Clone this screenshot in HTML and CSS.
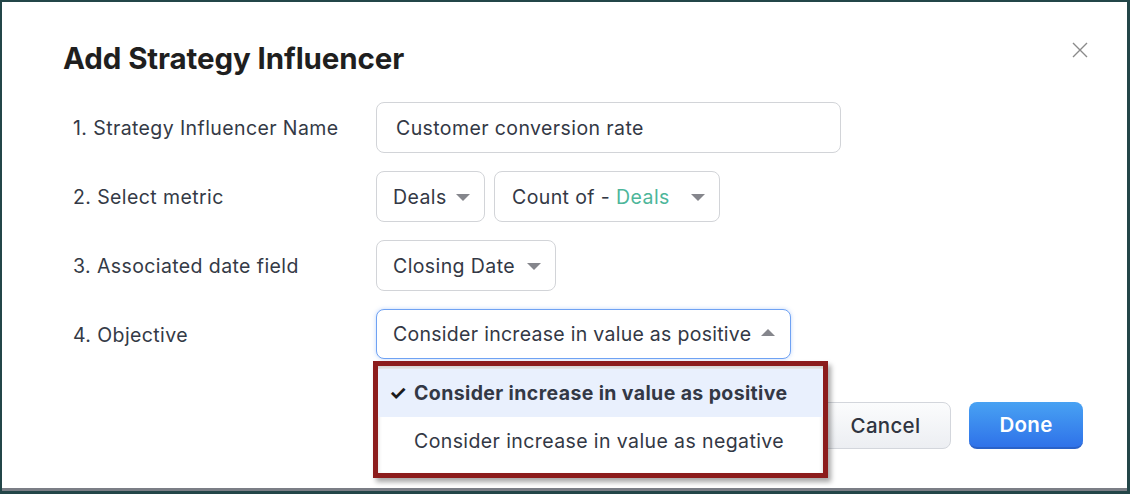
FILE: index.html
```html
<!DOCTYPE html>
<html>
<head>
<meta charset="utf-8">
<link rel="stylesheet" href="styles.css">
</head>
<body>
<div class="dialog">
  <button class="close" aria-label="Close">
    <svg width="16" height="16" viewBox="0 0 16 16"><path d="M1 1L15 15M15 1L1 15" stroke="#8a8a8a" stroke-width="1.4" fill="none"/></svg>
  </button>
  <h1 class="title">Add Strategy Influencer</h1>
  <div class="form">
    <div class="label">1. Strategy Influencer Name</div>
    <div class="field"><div class="input name-input">Customer conversion rate</div></div>

    <div class="label">2. Select metric</div>
    <div class="field">
      <div class="select sel-deals">Deals<span class="caret"></span></div>
      <div class="select sel-count"><span>Count of - <span class="green">Deals</span></span><span class="caret"></span></div>
    </div>

    <div class="label">3. Associated date field</div>
    <div class="field"><div class="select sel-date">Closing Date<span class="caret"></span></div></div>

    <div class="label">4. Objective</div>
    <div class="field objective">
      <div class="select sel-obj active">Consider increase in value as positive<span class="caret up"></span></div>
      <div class="menu">
        <div class="item selected"><span class="check">✓</span>Consider increase in value as positive</div>
        <div class="item">Consider increase in value as negative</div>
      </div>
    </div>
  </div>
  <div class="footer">
    <button class="btn cancel">Cancel</button>
    <button class="btn done">Done</button>
  </div>
</div>
</body>
</html>
```
FILE: styles.css
```css
html, body {
  margin: 0;
  padding: 0;
}
body {
  background: #234648;
  width: 1130px;
  height: 494px;
  overflow: hidden;
  font-family: Inter, "Noto Sans", sans-serif;
}
.dialog {
  position: relative;
  margin: 2px 3px 0 2px;
  height: 486px;
  background: #fff;
  border-bottom: 3px solid #7b7e86;
  box-sizing: content-box;
}
.close {
  position: absolute;
  top: 40px;
  right: 39px;
  width: 16px;
  height: 16px;
  padding: 0;
  border: 0;
  background: none;
}
.close svg { display: block; }
.title {
  margin: 0;
  padding: 38px 0 0 61px;
  font-size: 29.5px;
  line-height: 36px;
  font-weight: 700;
  color: #1f1f1f;
  letter-spacing: -0.1px;
}
.form {
  margin-top: 26px;
  padding-left: 71px;
  display: grid;
  grid-template-columns: 303px auto;
  row-gap: 18px;
  grid-auto-rows: 51px;
  letter-spacing: 0.4px;
  white-space: nowrap;
}
.label {
  display: flex;
  align-items: center;
  font-size: 19.5px;
  color: #343a46;
}
.field {
  display: flex;
  gap: 9px;
  align-items: stretch;
}
.input, .select {
  box-sizing: border-box;
  border: 1px solid #d2d4d8;
  border-radius: 8px;
  display: flex;
  align-items: center;
  font-size: 19.5px;
  color: #333845;
  background: #fff;
}
.name-input {
  width: 465px;
  padding-left: 19px;
}
.select {
  padding-left: 16px;
  padding-right: 14px;
  justify-content: space-between;
}
.sel-deals { width: 109px; }
.sel-count { width: 226px; padding-left: 17px; }
.sel-date { width: 180px; }
.sel-obj {
  width: 415px;
  height: 50px;
  padding-right: 15px;
  letter-spacing: 0.28px;
  border-color: #6fa2f3;
  box-shadow: 0 0 4px rgba(80, 140, 240, 0.35);
}
.green { color: #4db69a; }
.caret {
  flex: none;
  width: 0;
  height: 0;
  border-left: 7px solid transparent;
  border-right: 7px solid transparent;
  border-top: 7px solid #85868c;
  margin-left: 8px;
  margin-top: 2px;
}
.caret.up {
  border-top: 0;
  border-bottom: 7px solid #85868c;
  margin-top: 0;
  margin-bottom: 3px;
}
.objective { position: relative; }
.menu {
  position: absolute;
  left: -3px;
  top: 52px;
  width: 445px;
  height: 104px;
  background: #fff;
  border: 5px solid #8c1c1c;
  box-shadow: 3px 4px 5px rgba(0, 0, 0, 0.35), inset 0 3px 4px rgba(0, 0, 0, 0.18);
  padding-top: 3px;
  box-sizing: content-box;
  z-index: 2;
}
.item {
  height: 48px;
  display: flex;
  align-items: center;
  padding-left: 36px;
  font-size: 19.5px;
  color: #333845;
  position: relative;
}
.item.selected {
  background: #e9f0fd;
  font-weight: 700;
  letter-spacing: 0.38px;
}
.check {
  position: absolute;
  left: 11px;
  font-size: 20px;
  color: #1b1b1b;
}
.footer {
  margin-top: 42px;
  display: flex;
  justify-content: flex-end;
  gap: 18px;
  padding-right: 44px;
}
.btn {
  height: 47px;
  border-radius: 8px;
  font-family: Inter, "Noto Sans", sans-serif;
  font-size: 20.5px;
  font-weight: 500;
  box-sizing: border-box;
  letter-spacing: 0.3px;
}
.cancel {
  width: 131px;
  background: linear-gradient(#fbfcfd, #eceef2);
  border: 1px solid #d3d6dc;
  color: #2f3440;
}
.done {
  width: 114px;
  background: linear-gradient(#48a2f3, #2f72e9);
  border: 0;
  border-bottom: 2px solid #2a62c8;
  color: #fff;
  font-weight: 600;
}
```
